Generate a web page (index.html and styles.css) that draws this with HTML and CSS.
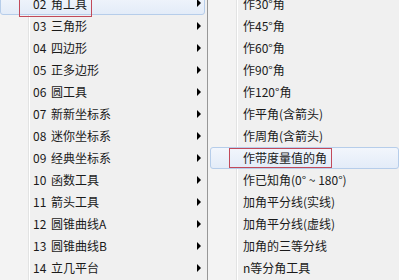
FILE: index.html
```html
<!DOCTYPE html>
<html lang="zh-CN">
<head>
<meta charset="utf-8">
<link rel="stylesheet" href="styles.css">
</head>
<body>
<div class="menus">
  <ul class="menu main">
    <li class="item hot"><span>02 角工具</span><i class="arrow"></i><b class="mark mark-main"></b></li>
    <li class="item"><span>03 三角形</span><i class="arrow"></i></li>
    <li class="item"><span>04 四边形</span><i class="arrow"></i></li>
    <li class="item"><span>05 正多边形</span><i class="arrow"></i></li>
    <li class="item"><span>06 圆工具</span><i class="arrow"></i></li>
    <li class="item"><span>07 新新坐标系</span><i class="arrow"></i></li>
    <li class="item"><span>08 迷你坐标系</span><i class="arrow"></i></li>
    <li class="item"><span>09 经典坐标系</span><i class="arrow"></i></li>
    <li class="item"><span>10 函数工具</span><i class="arrow"></i></li>
    <li class="item"><span>11 箭头工具</span><i class="arrow"></i></li>
    <li class="item"><span>12 圆锥曲线A</span><i class="arrow"></i></li>
    <li class="item"><span>13 圆锥曲线B</span><i class="arrow"></i></li>
    <li class="item"><span>14 立几平台</span><i class="arrow"></i></li>
  </ul>
  <ul class="menu sub">
    <li class="item"><span>作30°角</span></li>
    <li class="item"><span>作45°角</span></li>
    <li class="item"><span>作60°角</span></li>
    <li class="item"><span>作90°角</span></li>
    <li class="item"><span>作120°角</span></li>
    <li class="item"><span>作平角(含箭头)</span></li>
    <li class="item"><span>作周角(含箭头)</span></li>
    <li class="item hot sub-hot"><span>作带度量值的角</span><b class="mark mark-sub"></b></li>
    <li class="item"><span>作已知角(0° ~ 180°)</span></li>
    <li class="item"><span>加角平分线(实线)</span></li>
    <li class="item"><span>加角平分线(虚线)</span></li>
    <li class="item"><span>加角的三等分线</span></li>
    <li class="item"><span>n等分角工具</span></li>
  </ul>
</div>
</body>
</html>
```
FILE: styles.css
```css
html, body {
  margin: 0;
  padding: 0;
  background: #f0f0f0;
  overflow: hidden;
}
body {
  width: 399px;
  height: 280px;
  font-family: "Noto Sans CJK SC", "Noto Sans", sans-serif;
  font-size: 12px;
  color: #1a1a1a;
}
.menus {
  display: flex;
  margin-top: -7px;
  height: 287px;
}
.menu {
  list-style: none;
  margin: 0;
  padding: 0;
  position: relative;
  background: #f0f0f0;
}
.menu::before {
  content: "";
  position: absolute;
  top: 0;
  bottom: 0;
  width: 1px;
  background: #e2e3e3;
  box-shadow: 1px 0 0 #fff;
}
.main {
  width: 207px;
  border-right: 1px solid #979797;
  background: linear-gradient(to right, #f3f3f3 0, #f3f3f3 28px, #f0f0f0 28px);
}
.main::before { left: 28px; }
.sub {
  flex: 1;
  background: linear-gradient(to right, #f3f3f3 0, #f3f3f3 28px, #f0f0f0 28px);
}
.sub::before { left: 28px; }
.item {
  position: relative;
  height: 22px;
  display: flex;
  align-items: center;
  white-space: nowrap;
  line-height: 22px;
  z-index: 1;
}
.main .item { padding-left: 33px; word-spacing: 2px; }
.sub .item { padding-left: 35px; }
.item span { display: block; }
.hot {
  box-sizing: border-box;
  background: linear-gradient(#f2f6fc, #e3ecf8);
  border: 1px solid #b6cdea;
  border-radius: 3px;
}
.main .hot {
  width: 205px;
  padding-left: 32px;
}
.sub-hot {
  margin-left: 2px;
}
.sub .sub-hot { padding-left: 32px; }
.arrow {
  position: absolute;
  left: 197px;
  top: 50%;
  margin-top: -4px;
  width: 0;
  height: 0;
  border-left: 4px solid #000;
  border-top: 4px solid transparent;
  border-bottom: 4px solid transparent;
}
.main .hot .arrow { left: 196px; margin-top: -5px; }
.mark {
  position: absolute;
  border: 1px solid #c24a5a;
  pointer-events: none;
}
.mark-main {
  left: 18px;
  top: 3px;
  width: 71px;
  height: 18px;
}
.mark-sub {
  left: 18px;
  top: 0;
  width: 101px;
  height: 18px;
}
```
